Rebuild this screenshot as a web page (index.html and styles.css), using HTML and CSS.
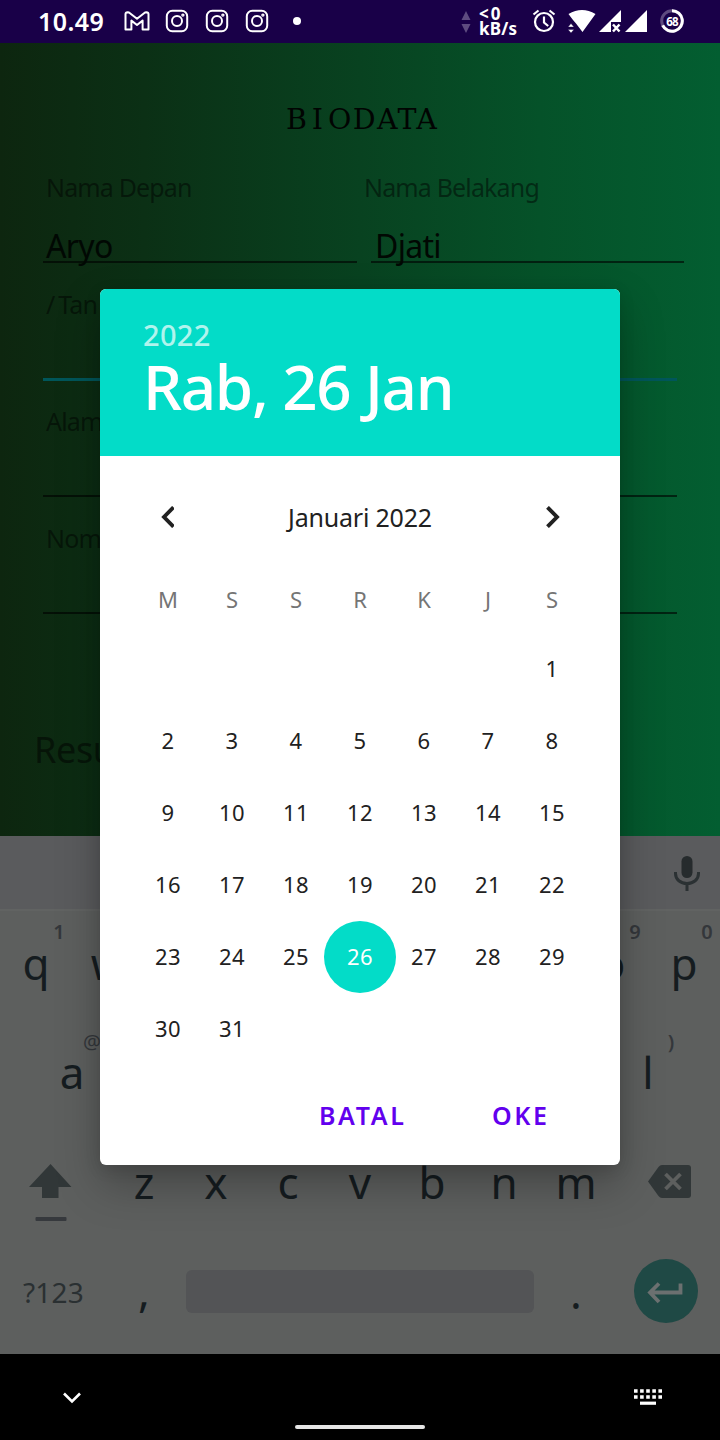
FILE: index.html
```html
<!DOCTYPE html>
<html lang="id">
<head>
<meta charset="utf-8">
<title>Biodata</title>
<link rel="stylesheet" href="styles.css">
</head>
<body>
<div class="phone">
  <header class="status">
    <span class="clock">10.49</span>
    <svg class="mail" width="26" height="20" viewBox="0 0 26 20"><path d="M1.500 3.200Q1.500 1.200 3.600 1.200L5 1.500 13 7.800 21 1.500 22.400 1.200Q24.500 1.200 24.500 3.200V18.500H18.600V9.600L13 14 7.400 9.600V18.500H1.500Z" fill="none" stroke="#fff" stroke-width="2" stroke-linejoin="round"/></svg>
    <svg class="insta" width="24" height="24" viewBox="0 0 24 24"><use href="#ig"/></svg>
    <svg class="insta" width="24" height="24" viewBox="0 0 24 24"><use href="#ig"/></svg>
    <svg class="insta" width="24" height="24" viewBox="0 0 24 24"><g id="ig" fill="none" stroke="#fff" stroke-width="2"><rect x="1.8" y="1.8" width="20.4" height="20.4" rx="5.5"/><circle cx="12" cy="12" r="5"/><circle cx="17.9" cy="6.1" r=".7"/></g></svg>
    <i class="dot"></i>
    <svg class="traffic" width="10" height="22" viewBox="0 0 10 22"><path d="M5 0L9.500 9H.5zM.5 13H9.500L5 22z" fill="#5e4b80"/></svg>
    <div class="speed"><span class="rate">&lt;0</span><span>kB/s</span></div>
    <svg class="alarm" width="24" height="24" viewBox="0 0 24 24"><g fill="none" stroke="#fff" stroke-width="2.200"><circle cx="12" cy="13" r="9"/><path d="M12 7.500V13.500L16.200 17M1.500 5.500L6.500 1.500M22.500 5.500L17.500 1.500"/></g></svg>
    <svg class="wifi" width="28" height="24" viewBox="0 0 28 24"><path d="M.5 4Q14-4 27.500 4L14.500 22L8 13.500 5 10z" fill="#fff"/><path d="M0 17L3 13.500 6 17zM0 19.500H6L3 23z" fill="#fff" stroke="#190048" stroke-width=".4"/></svg>
    <svg class="sig" width="24" height="24" viewBox="0 0 24 24"><path d="M22 0V12H12V22H0z" fill="#fff"/><path d="M14 14.500L20.500 21.500M20.500 14.500L14 21.500" stroke="#fff" stroke-width="2.500"/></svg>
    <svg class="sig2" width="22" height="24" viewBox="0 0 22 24"><path d="M22 0V22H0z" fill="#fff"/></svg>
    <div class="battery"><svg width="24" height="24" viewBox="0 0 24 24"><g fill="none" stroke-width="3"><circle cx="12" cy="12" r="10.300" stroke="#5e4b80"/><path d="M12 1.700A10.300 10.300 0 1 1 2.700 16.400" stroke="#fff"/></g></svg><b>68</b></div>
  </header>

  <main class="app">
    <h1 class="title">B<span class="wide">I</span>ODATA</h1>
    <div class="names">
      <div class="field first"><label class="label">Nama Depan</label><div class="value">Aryo</div></div>
      <div class="field second"><label class="label">Nama Belakang</label><div class="value">Djati</div></div>
    </div>
    <div class="field row active"><label class="label"><span class="slash">/</span>Tan</label><div class="value"></div></div>
    <div class="field row"><label class="label">Alamat</label><div class="value"></div></div>
    <div class="field row"><label class="label">Nomor</label><div class="value"></div></div>
    <p class="result">Result</p>
  </main>

  <section class="keyboard">
    <div class="tools"><svg width="26" height="36" viewBox="0 0 26 36"><rect x="7.500" y="0" width="11" height="22" rx="5.500" fill="#262b2d"/><path d="M1.500 16V17.500C1.500 23.500 6.500 27.500 13 27.500S24.500 23.500 24.500 17.500V16M13 27V35" fill="none" stroke="#2b3133" stroke-width="3"/></svg></div>
    <div class="keys top">
      <span class="key">q<sup>1</sup></span><span class="key">w</span><span class="key"></span><span class="key"></span><span class="key"></span><span class="key"></span><span class="key"></span><span class="key"></span><span class="key">o<sup>9</sup></span><span class="key">p<sup>0</sup></span>
    </div>
    <div class="keys">
      <span class="key">a<sup class="at">@</sup></span><span class="key"></span><span class="key"></span><span class="key"></span><span class="key"></span><span class="key"></span><span class="key"></span><span class="key"></span><span class="key">l<sup>)</sup></span>
    </div>
    <div class="keys">
      <span class="side shift"><svg width="44" height="58" viewBox="0 0 44 58"><path d="M21.500 0L42.500 23H29.500V34H13V23H0z" fill="#313738"/><rect x="6.500" y="53" width="31" height="4" rx="1" fill="#36393d"/></svg></span>
      <span class="key">z</span><span class="key">x</span><span class="key">c</span><span class="key">v</span><span class="key">b</span><span class="key">n</span><span class="key">m</span>
      <span class="side erase"><svg width="43" height="33" viewBox="0 0 43 33"><path d="M14 0H40Q43 0 43 3V30Q43 33 40 33H14Q12 33 10.500 31L0 16.500 10.500 2Q12 0 14 0Z" fill="#313738"/><path d="M17.500 9L32.500 24M32.500 9L17.500 24" stroke="#5d5f5e" stroke-width="3.800"/></svg></span>
    </div>
    <div class="keys">
      <span class="mode">?123</span><span class="key comma">,</span><span class="space"></span><span class="key">.</span>
      <span class="enter"><svg width="36" height="22" viewBox="0 0 36 22"><path d="M33.500 1.500V10.500H4M12 1.500L3 10.500 12 20" fill="none" stroke="#6b7070" stroke-width="3.800"/></svg></span>
    </div>
  </section>

  <nav class="nav">
    <div class="navrow">
      <svg width="18" height="12" viewBox="0 0 18 12"><path d="M1 1.500L9 9.500 17 1.500" fill="none" stroke="#fff" stroke-width="2.600"/></svg>
      <svg width="28" height="17" viewBox="0 0 28 17"><path d="M0 2H28M0 8H28" stroke="#fff" stroke-width="3.600" stroke-dasharray="3.600 2.500"/><path d="M6 14.200H22" stroke="#fff" stroke-width="3.200"/></svg>
    </div>
    <div class="home"></div>
  </nav>

  <div class="dialog">
    <div class="head"><div class="year">2022</div><div class="date">Rab, 26 Jan</div></div>
    <div class="month">
      <svg width="14" height="22" viewBox="0 0 14 22"><path d="M13.500 1.300L4 11 13.500 20.700" fill="none" stroke="#212121" stroke-width="3.900"/></svg>
      <span>Januari 2022</span>
      <svg width="14" height="22" viewBox="0 0 14 22"><path d="M1.500 1.300L11 11 1.500 20.700" fill="none" stroke="#212121" stroke-width="3.900"/></svg>
    </div>
    <div class="week"><span>M</span><span>S</span><span>S</span><span>R</span><span>K</span><span>J</span><span>S</span></div>
    <div class="days">
      <span class="start">1</span>
      <span>2</span><span>3</span><span>4</span><span>5</span><span>6</span><span>7</span><span>8</span>
      <span>9</span><span>10</span><span>11</span><span>12</span><span>13</span><span>14</span><span>15</span>
      <span>16</span><span>17</span><span>18</span><span>19</span><span>20</span><span>21</span><span>22</span>
      <span>23</span><span>24</span><span>25</span><span class="on">26</span><span>27</span><span>28</span><span>29</span>
      <span>30</span><span>31</span>
    </div>
    <div class="actions"><span class="cancel">BATAL</span><span class="ok">OKE</span></div>
  </div>
</div>
</body>
</html>
```
FILE: styles.css
```css
* { box-sizing: border-box; margin: 0; padding: 0; }
body { font-family: "Noto Sans", sans-serif; background: #000; }
svg { display: block; flex: none; }
.phone { position: relative; width: 720px; height: 1440px; overflow: hidden; }

.status { display: flex; height: 43px; background: #190048; color: #fff; align-items: flex-start; padding-left: 38px; }
.clock { width: 86px; font-size: 25px; font-weight: 600; line-height: 43px; letter-spacing: 0.4px; }
.mail { margin: 11px 15px 0 0; }
.insta { margin: 9px 16px 0 0; }
.dot { width: 8px; height: 8px; border-radius: 50%; background: #fff; margin: 17px 160px 0 8px; }
.traffic { margin-top: 11px; }
.speed { display: flex; flex-direction: column; margin: 5px 0 0 8px; width: 53px; font-size: 17px; font-weight: 700; line-height: 17px; letter-spacing: 0.2px; }
.rate { letter-spacing: 2px; }
.speed span:last-child { line-height: 14px; }
.alarm { margin-top: 9px; }
.wifi { margin: 10px 0 0 12px; }
.sig { margin: 10px 0 0 3px; }
.sig2 { margin: 10px 0 0 2px; }
.battery { position: relative; margin: 9px 0 0 13px; }
.battery b { position: absolute; inset: 0; text-align: center; font-size: 11.5px; line-height: 25px; font-weight: 700; letter-spacing: -0.8px; }

.app { height: 793px; padding-top: 57px; background: linear-gradient(90deg, #0d260f 0%, #0b3015 20%, #084220 50%, #055229 75%, #035e31 100%); }
.title { height: 40px; line-height: 40px; padding-left: 286px; font-family: "DejaVu Serif", serif; font-size: 28.5px; font-weight: 400; letter-spacing: 1.4px; color: #010402; white-space: nowrap; }
.wide { padding: 0 3.5px; }
.names { display: flex; gap: 14px; margin: 28px 0 0 43px; }
.first { width: 314px; }
.second { width: 313px; }
.second .label { margin-left: -10px; }
.label { display: block; height: 40px; line-height: 38px; padding-left: 3px; font-size: 25px; font-weight: 400; letter-spacing: -0.85px; color: rgba(0, 0, 0, 0.48); white-space: nowrap; }
.slash { letter-spacing: 3px; }
.value { height: 55px; border-bottom: 2px solid rgba(0, 0, 0, 0.6); color: #010803; }
.names .value { padding: 20px 0 0 3px; font-size: 32px; font-weight: 400; line-height: 35px; letter-spacing: -0.7px; }
.second .value { padding-left: 4px; }
.row { width: 634px; margin: 22px 0 0 43px; }
.active { margin-top: 22px; }
.active .value { height: 56px; border-bottom: 3px solid #00565a; }
.active + .row { margin-top: 21px; }
.result { padding-left: 34px; margin-top: 110px; line-height: 52px; font-size: 36px; font-weight: 400; letter-spacing: -0.4px; color: rgba(0, 0, 0, 0.5); }

.keyboard { height: 518px; background: #5d5f5e; color: #151c20; }
.tools { height: 75px; background: #5a5b5d; border-bottom: 2px solid #616362; display: flex; justify-content: flex-end; padding: 20px 20px 0 0; }
.keys { display: flex; justify-content: center; height: 110px; }
.key { position: relative; width: 72px; text-align: center; font-size: 44px; line-height: 102px; }
.top .key { line-height: 105px; }
.key.comma { line-height: 98px; }
.key sup { position: absolute; left: 47px; top: 9px; width: 24px; text-align: center; font-size: 20px; line-height: 24px; font-weight: 600; color: #34373b; }
.key sup.at { left: 44px; font-weight: 400; }
.side { width: 108px; }
.shift { padding: 33px 0 0 29px; }
.erase { padding: 34px 0 0 36px; }
.mode { width: 108px; padding-left: 23px; font-size: 28px; font-weight: 400; line-height: 102px; letter-spacing: 0.2px; color: #2a3032; }
.space { width: 348px; height: 43px; margin: 29px 6px 0; border-radius: 6px; background: #535456; }
.enter { width: 64px; height: 64px; margin: 18px 22px 0; border-radius: 50%; background: #1f4945; padding: 23px 0 0 13px; }

.nav { height: 86px; background: #000; }
.navrow { display: flex; justify-content: space-between; padding: 35px 58px 0 63px; height: 71px; }
.navrow svg:first-child { margin-top: 3px; }
.home { width: 130px; height: 4px; margin: 0 auto; border-radius: 2px; background: #e6e6e6; }

.dialog { position: absolute; left: 100px; top: 289px; width: 520px; height: 876px; border-radius: 6px; background: #fff; color: #212121; box-shadow: 0 20px 44px rgba(0, 0, 0, 0.26), 0 4px 16px rgba(0, 0, 0, 0.12); }
.head { height: 167px; padding: 25px 0 0 43px; border-radius: 6px 6px 0 0; background: #03dcc8; color: #fff; }
.year { height: 40px; line-height: 41px; font-size: 29px; font-weight: 500; letter-spacing: 0.3px; color: rgba(255, 255, 255, 0.7); }
.date { line-height: 65px; font-size: 62px; font-weight: 500; letter-spacing: -1.4px; white-space: nowrap; }
.month { display: flex; justify-content: space-between; align-items: center; padding: 0 60px; height: 122px; font-size: 25px; font-weight: 400; letter-spacing: -0.2px; }
.week, .days { display: grid; grid-template-columns: repeat(7, 64px); padding: 0 36px; text-align: center; font-size: 22px; font-weight: 400; }
.week { height: 55px; line-height: 43px; color: #757575; }
.days { grid-auto-rows: 72px; line-height: 71px; letter-spacing: 0.3px; }
.start { grid-column: 7; }
.on { width: 72px; margin-left: -4px; border-radius: 50%; background: #03dcc8; color: #fff; }
.actions { display: flex; margin-top: 30px; padding-left: 219px; font-size: 25px; font-weight: 600; line-height: 40px; letter-spacing: 2.6px; color: #6200ee; }
.cancel { width: 173px; }
```
